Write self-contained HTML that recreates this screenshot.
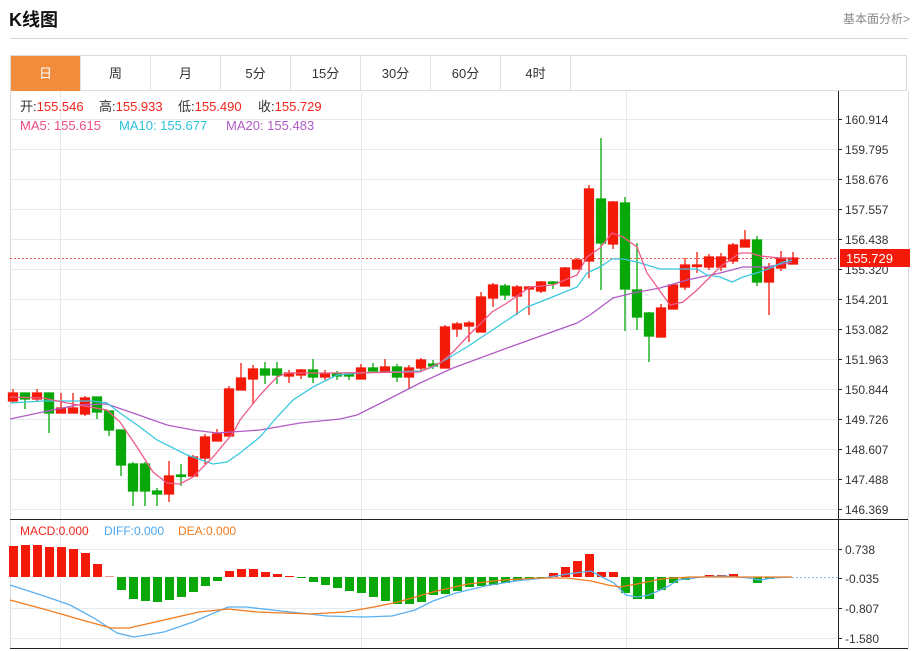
<!DOCTYPE html>
<html><head><meta charset="utf-8"><style>
body{margin:0;width:914px;height:651px;background:#fff;font-family:"Liberation Sans","Noto Sans CJK SC",sans-serif;position:relative;overflow:hidden}
.t{position:absolute;left:9px;top:6px;font-size:18px;font-weight:bold;color:#111}
.a{position:absolute;left:843px;top:10px;font-size:12px;color:#888}
.hr{position:absolute;left:10px;top:38px;width:898px;height:1px;background:#d5d5d5}
.tabs{position:absolute;left:10px;top:55px;width:897px;height:36px;border:1px solid #dcdcdc;box-sizing:border-box}
.tab{position:absolute;top:0;width:70px;height:35px;line-height:35px;text-align:center;font-size:13px;color:#333;border-right:1px solid #e0e0e0;box-sizing:border-box}
svg{position:absolute;left:0;top:0}
</style></head><body>
<div class="t">K线图</div>
<div class="a">基本面分析&gt;</div>
<div class="hr"></div>
<div class="tabs">
<div class="tab" style="left:0;background:#f28c3c;color:#fff">日</div>
<div class="tab" style="left:70px">周</div>
<div class="tab" style="left:140px">月</div>
<div class="tab" style="left:210px">5分</div>
<div class="tab" style="left:280px">15分</div>
<div class="tab" style="left:350px">30分</div>
<div class="tab" style="left:420px">60分</div>
<div class="tab" style="left:490px">4时</div>
</div>
<svg width="914" height="651" viewBox="0 0 914 651" font-family="Liberation Sans, Noto Sans CJK SC, sans-serif">
<g stroke="#e3ebf0" stroke-width="1">
<line x1="10" y1="119.5" x2="838" y2="119.5"/><line x1="10" y1="149.5" x2="838" y2="149.5"/><line x1="10" y1="179.5" x2="838" y2="179.5"/><line x1="10" y1="209.5" x2="838" y2="209.5"/><line x1="10" y1="239.5" x2="838" y2="239.5"/><line x1="10" y1="269.5" x2="838" y2="269.5"/><line x1="10" y1="299.5" x2="838" y2="299.5"/><line x1="10" y1="329.5" x2="838" y2="329.5"/><line x1="10" y1="359.5" x2="838" y2="359.5"/><line x1="10" y1="389.5" x2="838" y2="389.5"/><line x1="10" y1="419.5" x2="838" y2="419.5"/><line x1="10" y1="449.5" x2="838" y2="449.5"/><line x1="10" y1="479.5" x2="838" y2="479.5"/><line x1="10" y1="509.5" x2="838" y2="509.5"/>
<line x1="10" y1="549.5" x2="838" y2="549.5"/><line x1="10" y1="608.5" x2="838" y2="608.5"/><line x1="10" y1="638.5" x2="838" y2="638.5"/>
<line x1="60.5" y1="91" x2="60.5" y2="648"/><line x1="361.5" y1="91" x2="361.5" y2="648"/><line x1="626.5" y1="91" x2="626.5" y2="648"/>
</g>
<line x1="10.5" y1="91" x2="10.5" y2="648" stroke="#dcdcdc"/>
<line x1="908.5" y1="91" x2="908.5" y2="648" stroke="#dcdcdc"/>
<line x1="838.5" y1="91" x2="838.5" y2="648" stroke="#222"/>
<line x1="10" y1="519.5" x2="908" y2="519.5" stroke="#222"/>
<line x1="10" y1="648.5" x2="908" y2="648.5" stroke="#222"/>
<g stroke="#222"><line x1="838" y1="119.5" x2="842" y2="119.5"/><line x1="838" y1="149.5" x2="842" y2="149.5"/><line x1="838" y1="179.5" x2="842" y2="179.5"/><line x1="838" y1="209.5" x2="842" y2="209.5"/><line x1="838" y1="239.5" x2="842" y2="239.5"/><line x1="838" y1="269.5" x2="842" y2="269.5"/><line x1="838" y1="299.5" x2="842" y2="299.5"/><line x1="838" y1="329.5" x2="842" y2="329.5"/><line x1="838" y1="359.5" x2="842" y2="359.5"/><line x1="838" y1="389.5" x2="842" y2="389.5"/><line x1="838" y1="419.5" x2="842" y2="419.5"/><line x1="838" y1="449.5" x2="842" y2="449.5"/><line x1="838" y1="479.5" x2="842" y2="479.5"/><line x1="838" y1="509.5" x2="842" y2="509.5"/><line x1="838" y1="549.5" x2="842" y2="549.5"/><line x1="838" y1="578.5" x2="842" y2="578.5"/><line x1="838" y1="608.5" x2="842" y2="608.5"/><line x1="838" y1="638.5" x2="842" y2="638.5"/></g>
<g font-size="12" fill="#333">
<text x="845" y="124">160.914</text><text x="845" y="154">159.795</text><text x="845" y="184">158.676</text><text x="845" y="214">157.557</text><text x="845" y="244">156.438</text><text x="845" y="274">155.320</text><text x="845" y="304">154.201</text><text x="845" y="334">153.082</text><text x="845" y="364">151.963</text><text x="845" y="394">150.844</text><text x="845" y="424">149.726</text><text x="845" y="454">148.607</text><text x="845" y="484">147.488</text><text x="845" y="514">146.369</text>
<text x="845" y="554">0.738</text><text x="845" y="583">-0.035</text><text x="845" y="613">-0.807</text><text x="845" y="643">-1.580</text>
</g>
<g font-size="13">
<text x="20" y="111" fill="#333">开:<tspan fill="#f3241a">155.546</tspan></text>
<text x="99" y="111" fill="#333">高:<tspan fill="#f3241a">155.933</tspan></text>
<text x="178" y="111" fill="#333">低:<tspan fill="#f3241a">155.490</tspan></text>
<text x="258" y="111" fill="#333">收:<tspan fill="#f3241a">155.729</tspan></text>
<text x="20" y="130" fill="#ee4f86">MA5: 155.615</text>
<text x="119" y="130" fill="#2cc3dc">MA10: 155.677</text>
<text x="226" y="130" fill="#b05cc6">MA20: 155.483</text>
<text x="20" y="535" fill="#f3241a" font-size="12">MACD:0.000</text>
<text x="104" y="535" fill="#4aa6ee" font-size="12">DIFF:0.000</text>
<text x="178" y="535" fill="#f07b1e" font-size="12">DEA:0.000</text>
</g>
<line x1="10" y1="258.5" x2="838" y2="258.5" stroke="#f35a50" stroke-dasharray="2,2"/>
<g stroke-width="1.3">
<g stroke="#f31a0a" fill="#f31a0a">
<line x1="13" y1="389" x2="13" y2="403"/><rect x="8.5" y="393" width="9" height="8"/>
<line x1="37" y1="389" x2="37" y2="402"/><rect x="32.5" y="393" width="9" height="6"/>
<line x1="61" y1="393" x2="61" y2="413"/><rect x="56.5" y="408" width="9" height="5"/>
<line x1="73" y1="393" x2="73" y2="413"/><rect x="68.5" y="408" width="9" height="5"/>
<line x1="85" y1="396" x2="85" y2="416"/><rect x="80.5" y="398" width="9" height="16"/>
<line x1="169" y1="461" x2="169" y2="502"/><rect x="164.5" y="476" width="9" height="18"/>
<line x1="193" y1="455" x2="193" y2="477"/><rect x="188.5" y="457" width="9" height="19"/>
<line x1="205" y1="434" x2="205" y2="464"/><rect x="200.5" y="437" width="9" height="21"/>
<line x1="217" y1="429" x2="217" y2="441"/><rect x="212.5" y="434" width="9" height="7"/>
<line x1="229" y1="386" x2="229" y2="436"/><rect x="224.5" y="389" width="9" height="47"/>
<line x1="241" y1="363" x2="241" y2="390"/><rect x="236.5" y="378" width="9" height="12"/>
<line x1="253" y1="365" x2="253" y2="404"/><rect x="248.5" y="369" width="9" height="10"/>
<line x1="289" y1="370" x2="289" y2="383"/><rect x="284.5" y="373" width="9" height="3"/>
<line x1="301" y1="369" x2="301" y2="379"/><rect x="296.5" y="370" width="9" height="5"/>
<line x1="325" y1="370" x2="325" y2="380"/><rect x="320.5" y="374" width="9" height="3"/>
<line x1="361" y1="364" x2="361" y2="379"/><rect x="356.5" y="368" width="9" height="11"/>
<line x1="385" y1="359" x2="385" y2="372"/><rect x="380.5" y="367" width="9" height="5"/>
<line x1="409" y1="365" x2="409" y2="389"/><rect x="404.5" y="368" width="9" height="9"/>
<line x1="421" y1="358" x2="421" y2="370"/><rect x="416.5" y="360" width="9" height="8"/>
<line x1="445" y1="325" x2="445" y2="368"/><rect x="440.5" y="327" width="9" height="41"/>
<line x1="457" y1="322" x2="457" y2="337"/><rect x="452.5" y="324" width="9" height="5"/>
<line x1="469" y1="321" x2="469" y2="342"/><rect x="464.5" y="323" width="9" height="3"/>
<line x1="481" y1="292" x2="481" y2="332"/><rect x="476.5" y="297" width="9" height="35"/>
<line x1="493" y1="283" x2="493" y2="307"/><rect x="488.5" y="285" width="9" height="13"/>
<line x1="517" y1="285" x2="517" y2="315"/><rect x="512.5" y="287" width="9" height="9"/>
<line x1="529" y1="286" x2="529" y2="315"/><rect x="524.5" y="287" width="9" height="2"/>
<line x1="541" y1="281" x2="541" y2="293"/><rect x="536.5" y="282" width="9" height="9"/>
<line x1="565" y1="267" x2="565" y2="286"/><rect x="560.5" y="268" width="9" height="18"/>
<line x1="577" y1="258" x2="577" y2="269"/><rect x="572.5" y="260" width="9" height="9"/>
<line x1="589" y1="185" x2="589" y2="278"/><rect x="584.5" y="189" width="9" height="72"/>
<line x1="613" y1="201" x2="613" y2="249"/><rect x="608.5" y="202" width="9" height="42"/>
<line x1="661" y1="304" x2="661" y2="337"/><rect x="656.5" y="308" width="9" height="29"/>
<line x1="673" y1="284" x2="673" y2="309"/><rect x="668.5" y="285" width="9" height="24"/>
<line x1="685" y1="258" x2="685" y2="290"/><rect x="680.5" y="265" width="9" height="22"/>
<line x1="697" y1="252" x2="697" y2="273"/><rect x="692.5" y="265" width="9" height="1.5"/>
<line x1="709" y1="254" x2="709" y2="270"/><rect x="704.5" y="257" width="9" height="10"/>
<line x1="721" y1="253" x2="721" y2="271"/><rect x="716.5" y="257" width="9" height="10"/>
<line x1="733" y1="243" x2="733" y2="264"/><rect x="728.5" y="245" width="9" height="16"/>
<line x1="745" y1="230" x2="745" y2="247"/><rect x="740.5" y="240" width="9" height="7"/>
<line x1="769" y1="263" x2="769" y2="315"/><rect x="764.5" y="267" width="9" height="15"/>
<line x1="781" y1="251" x2="781" y2="271"/><rect x="776.5" y="258" width="9" height="10"/>
<line x1="793" y1="252" x2="793" y2="264"/><rect x="788.5" y="258" width="9" height="6"/>
</g>
<g stroke="#08a808" fill="#08a808">
<line x1="25" y1="393" x2="25" y2="409"/><rect x="20.5" y="393" width="9" height="6"/>
<line x1="49" y1="393" x2="49" y2="433"/><rect x="44.5" y="393" width="9" height="20"/>
<line x1="97" y1="397" x2="97" y2="419"/><rect x="92.5" y="397" width="9" height="15"/>
<line x1="109" y1="411" x2="109" y2="436"/><rect x="104.5" y="411" width="9" height="19"/>
<line x1="121" y1="430" x2="121" y2="476"/><rect x="116.5" y="430" width="9" height="35"/>
<line x1="133" y1="462" x2="133" y2="506"/><rect x="128.5" y="464" width="9" height="27"/>
<line x1="145" y1="462" x2="145" y2="506"/><rect x="140.5" y="464" width="9" height="27"/>
<line x1="157" y1="488" x2="157" y2="506"/><rect x="152.5" y="491" width="9" height="3"/>
<line x1="181" y1="464" x2="181" y2="486"/><rect x="176.5" y="475" width="9" height="1.5"/>
<line x1="265" y1="362" x2="265" y2="384"/><rect x="260.5" y="369" width="9" height="6"/>
<line x1="277" y1="362" x2="277" y2="384"/><rect x="272.5" y="369" width="9" height="6"/>
<line x1="313" y1="359" x2="313" y2="383"/><rect x="308.5" y="370" width="9" height="7"/>
<line x1="337" y1="371" x2="337" y2="380"/><rect x="332.5" y="374" width="9" height="2"/>
<line x1="349" y1="372" x2="349" y2="380"/><rect x="344.5" y="374" width="9" height="2"/>
<line x1="373" y1="363" x2="373" y2="373"/><rect x="368.5" y="368" width="9" height="3"/>
<line x1="397" y1="364" x2="397" y2="382"/><rect x="392.5" y="367" width="9" height="10"/>
<line x1="433" y1="360" x2="433" y2="369"/><rect x="428.5" y="364" width="9" height="2"/>
<line x1="505" y1="284" x2="505" y2="300"/><rect x="500.5" y="286" width="9" height="9"/>
<line x1="553" y1="281" x2="553" y2="289"/><rect x="548.5" y="282" width="9" height="1.5"/>
<line x1="601" y1="138" x2="601" y2="290"/><rect x="596.5" y="199" width="9" height="44"/>
<line x1="625" y1="197" x2="625" y2="331"/><rect x="620.5" y="203" width="9" height="86"/>
<line x1="637" y1="243" x2="637" y2="330"/><rect x="632.5" y="290" width="9" height="27"/>
<line x1="649" y1="312" x2="649" y2="362"/><rect x="644.5" y="313" width="9" height="23"/>
<line x1="757" y1="236" x2="757" y2="286"/><rect x="752.5" y="240" width="9" height="42"/>
</g>
</g>
<g fill="none" stroke-width="1.3">
<polyline stroke="#b05cc6" points="10,419 43,412 77,405 107,404 133,413 167,425 193,430 217,433 260,430 300,423 340,419 357,415 383,402 420,383 453,368 510,347 577,323 590,315 613,298 633,293 660,288 687,280 720,273 743,267 767,267 792,262"/>
<polyline stroke="#3cc8e0" points="10,403 43,401 93,401 107,403 120,413 140,427 157,440 187,455 213,464 227,462 240,453 260,437 277,417 293,400 313,387 337,375 360,373 420,371 433,367 467,347 503,323 527,307 550,298 577,287 587,273 600,267 612,259 623,259 637,262 660,269 697,269 707,275 720,277 732,282 743,277 760,272 773,267 783,262 792,260"/>
<polyline stroke="#ee5b8b" points="10,397 43,398 67,403 107,410 120,422 137,447 153,472 167,483 180,484 193,477 213,457 233,433 240,420 260,395 277,377 287,373 333,373 420,372 440,363 453,352 467,337 492,312 507,303 530,287 553,285 577,275 587,257 600,248 612,233 623,237 637,247 647,273 670,305 683,302 697,290 720,267 740,253 750,253 760,256 780,258 792,258"/>
</g>
<rect x="840" y="249" width="70" height="18" fill="#f31a0a"/>
<text x="846" y="263" fill="#fff" font-size="13">155.729</text>
<g fill="#f31a0a">
<rect x="9" y="546" width="9" height="31"/><rect x="21" y="545" width="9" height="32"/><rect x="33" y="545" width="9" height="32"/><rect x="45" y="547" width="9" height="30"/><rect x="57" y="547" width="9" height="30"/><rect x="69" y="549" width="9" height="28"/><rect x="81" y="553" width="9" height="24"/><rect x="93" y="564" width="9" height="13"/><rect x="105" y="576" width="9" height="1" fill="#f59a90"/>
<rect x="225" y="571" width="9" height="6"/><rect x="237" y="569" width="9" height="8"/><rect x="249" y="569" width="9" height="8"/><rect x="261" y="572" width="9" height="5"/><rect x="273" y="574" width="9" height="3"/><rect x="285" y="576" width="9" height="1"/>
<rect x="549" y="573" width="9" height="4"/><rect x="561" y="567" width="9" height="10"/><rect x="573" y="561" width="9" height="16"/><rect x="585" y="554" width="9" height="23"/><rect x="597" y="572" width="9" height="5"/><rect x="609" y="572" width="9" height="5"/>
<rect x="705" y="575" width="9" height="2"/><rect x="717" y="575" width="9" height="2"/><rect x="729" y="574" width="9" height="3"/>
</g>
<g fill="#08a808">
<rect x="117" y="577" width="9" height="13"/><rect x="129" y="577" width="9" height="22"/><rect x="141" y="577" width="9" height="24"/><rect x="153" y="577" width="9" height="25"/><rect x="165" y="577" width="9" height="23"/><rect x="177" y="577" width="9" height="20"/><rect x="189" y="577" width="9" height="15"/><rect x="201" y="577" width="9" height="9"/><rect x="213" y="577" width="9" height="4"/>
<rect x="297" y="577" width="9" height="1"/><rect x="309" y="577" width="9" height="5"/><rect x="321" y="577" width="9" height="8"/><rect x="333" y="577" width="9" height="11"/><rect x="345" y="577" width="9" height="14"/><rect x="357" y="577" width="9" height="16"/><rect x="369" y="577" width="9" height="20"/><rect x="381" y="577" width="9" height="24"/><rect x="393" y="577" width="9" height="27"/><rect x="405" y="577" width="9" height="27"/><rect x="417" y="577" width="9" height="25"/><rect x="429" y="577" width="9" height="18"/><rect x="441" y="577" width="9" height="17"/><rect x="453" y="577" width="9" height="14"/><rect x="465" y="577" width="9" height="10"/><rect x="477" y="577" width="9" height="9"/><rect x="489" y="577" width="9" height="8"/><rect x="501" y="577" width="9" height="6"/><rect x="513" y="577" width="9" height="4"/><rect x="525" y="577" width="9" height="2"/><rect x="537" y="577" width="9" height="1"/>
<rect x="621" y="577" width="9" height="16"/><rect x="633" y="577" width="9" height="22"/><rect x="645" y="577" width="9" height="22"/><rect x="657" y="577" width="9" height="13"/><rect x="669" y="577" width="9" height="6"/><rect x="681" y="577" width="9" height="3"/><rect x="753" y="577" width="9" height="6"/><rect x="765" y="577" width="9" height="2"/>
</g>
<line x1="792" y1="577.5" x2="838" y2="577.5" stroke="#7fc7e6" stroke-dasharray="2,2"/>
<g fill="none" stroke-width="1.3">
<polyline stroke="#5ab0f0" points="10,585 47,597 70,605 94,618 117,633 134,637 164,632 193,622 228,607 246,607 281,611 327,616 363,617 392,616 415,610 433,601 456,593 485,586 515,581 544,578 567,574 591,571 602,577 614,583 626,595 637,597 649,595 667,587 678,580 702,577 725,576 749,578 760,580 772,578 792,577"/>
<polyline stroke="#f07b1e" points="10,600 47,610 82,620 111,628 129,628 164,620 199,612 228,609 257,612 310,614 345,612 374,607 398,602 433,592 468,584 503,580 538,578 567,578 591,581 608,585 620,587 637,584 661,579 690,577 737,577 792,577"/>
</g>
</svg>
</body></html>
